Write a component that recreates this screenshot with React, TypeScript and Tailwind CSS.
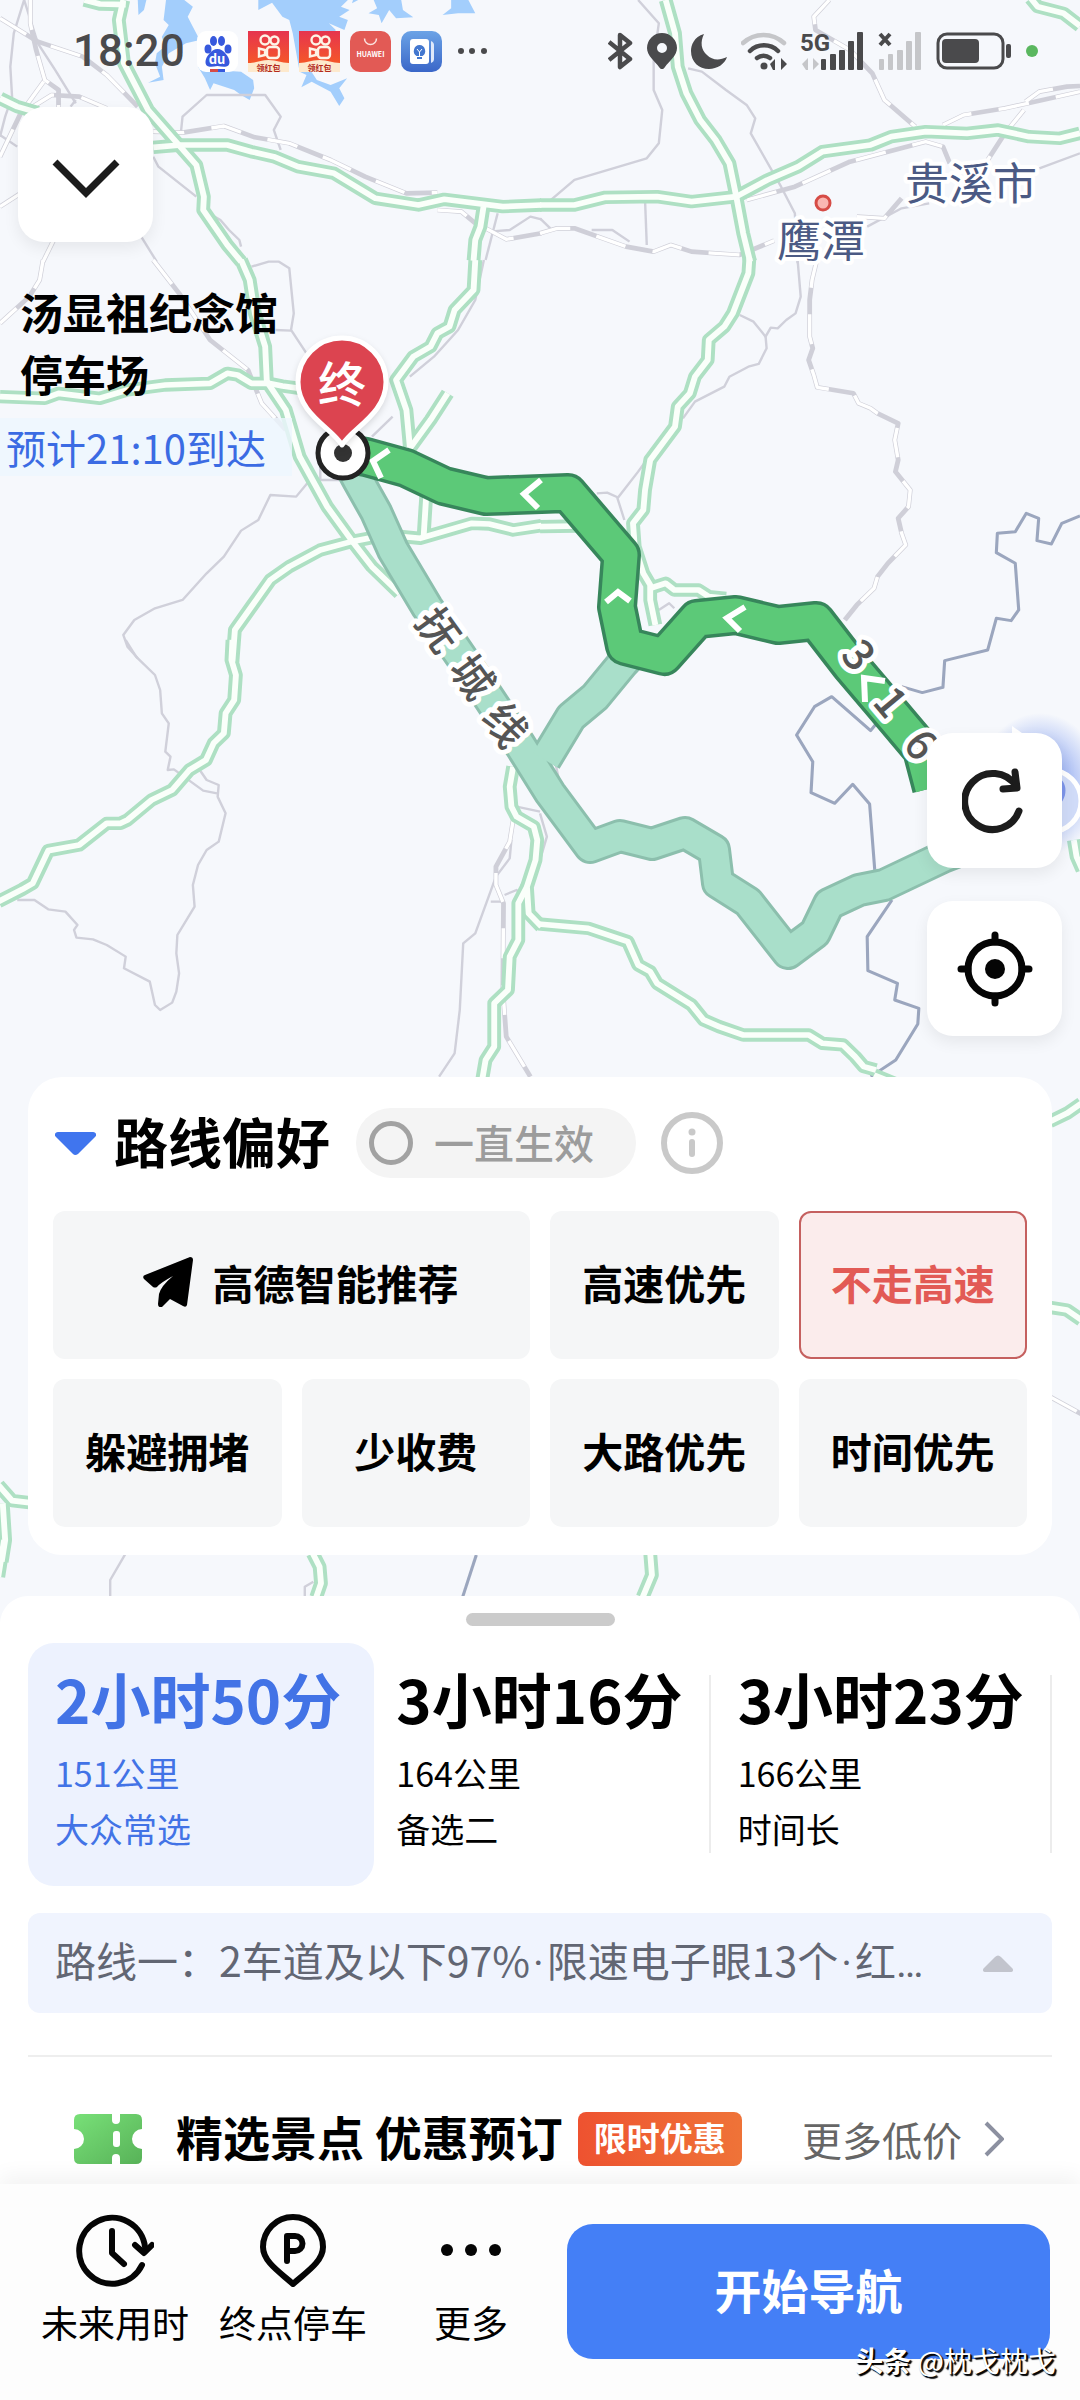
import { useState } from 'react';

type Tile = {
  x: number;
  y: number;
  highways?: string[];
  roads?: string[];
  rails?: string[];
  borders?: string[];
  water?: string[];
};

// Vector tiles, each with its own local coordinates
const TILES: Tile[] = [
  {
    x: 0, y: 0,
    water: [
      '482,0 475,60 490,75 470,110 478,140 455,160 450,190 465,230 430,248 475,240 470,200 490,160 540,130 580,120 560,80 545,50 560,20 535,0',
      '575,200 595,235 610,270 620,250 680,270 700,285 725,300 738,265 735,240 700,215 620,210',
      '750,0 750,30 790,8 820,50 840,60 850,100 870,215 890,225 875,262 905,245 960,275 985,318 1000,295 985,265 1008,235 960,255 920,240 895,200 940,150 975,90 955,70 1000,90 1010,60 985,50 1015,30 990,20 1010,0',
      '1085,0 1095,25 1070,40 1100,45 1108,70 1130,30 1150,55 1200,52 1170,30 1165,0',
      '1310,0 1310,25 1285,45 1330,40 1380,40 1360,0',
      '400,0 402,45 418,30 425,0',
      '1025,0 1022,10 1040,0',
    ],
    highways: [
      '0,295 50,320 110,338',
      '245,0 290,12 365,14',
      '358,0 345,60 360,190 430,330 515,430 570,495 592,590 590,630 660,735 700,785',
      '445,442 525,435 660,435 730,455 795,470 865,500 970,520 1090,595 1215,615 1290,598 1460,620 1572,615',
      '1404,620 1395,680 1380,720 1375,782',
    ],
    roads: [
      '70,0 40,100 30,200 35,290 15,350 0,410',
      '70,0 110,130 160,210 220,310',
      '525,400 530,350 600,285 770,285 815,350 795,390 815,450',
      '445,470 460,500 570,590',
      '590,630 640,660 665,690 695,720 700,740',
      '410,710 455,785',
      '1445,640 1410,780',
      '1420,695 1480,690 1540,650 1572,658',
      '220,300 205,320',
      '0,405 50,440',
    ],
    rails: [
      '0,55 110,125 240,170 310,225 400,320',
      '88,0 88,70 105,150 130,240 170,270 170,322',
      '0,470 60,340 130,240',
      '80,330 150,285 230,290 310,325',
      '445,395 530,398 650,378 740,412 840,430 960,480 1060,530 1180,580 1270,578',
      '125,785 155,722',
      '0,620 60,580',
      '1270,630 1340,635 1380,670',
      '1410,685 1470,718 1572,700',
    ],
  },
  {
    x: 540, y: 0,
    highways: [
      '0,615 100,615 190,592 340,590 440,605 570,590 660,540 750,500 820,455 960,435 1020,410 1120,395 1240,400 1330,390 1420,410 1510,415 1568,400',
      '365,0 392,100 400,200 425,280 465,360 510,420 550,490 570,590 590,700 610,785',
      '1425,-5 1445,20 1520,40 1568,78',
    ],
    roads: [
      '285,0 345,70 330,180 330,270 355,330 345,430 310,475 100,540 20,610',
      '430,205 470,215 540,270 600,315 625,355 612,400 700,560 740,640 748,790',
      '305,600 310,735',
      '1450,505 1568,460',
      '950,680 1050,625 1130,610',
      '150,690 210,690 260,725',
      '0,655 30,685',
    ],
    rails: [
      '0,700 50,685 100,685 250,740 330,755 380,735 440,755 580,765 680,722',
      '840,0 795,50 800,90 900,150 965,220 1000,300 1090,380',
      '600,600 740,560 900,485 1120,425 1170,440 1190,490',
      '1170,375 1230,345 1350,325 1568,275',
      '1410,305 1450,275 1530,260 1568,258',
      '1405,330 1350,400 1300,480',
      '920,650 1000,655 1050,595',
    ],
  },
  {
    x: 0, y: 260,
    highways: [
      '700,0 725,60 740,160 770,260 775,370',
      '0,410 130,415 170,400 290,415 370,390 480,375 610,370 660,340 690,345 730,370 780,370 820,378 870,385',
      '775,365 830,450 870,590 950,740 1020,840 1080,920 1160,1000',
      '675,1205 682,1110 730,1040 785,960 840,920 930,870 1020,845 1120,825 1220,835 1370,790 1420,792 1490,810 1572,797',
      '1380,0 1375,90 1320,150 1305,200 1270,220 1250,260 1200,290 1150,360 1180,450 1190,560',
      '1190,565 1250,480 1300,400',
      '1238,700 1230,830',
    ],
    roads: [
      '730,20 780,5 810,5 840,25 853,160 845,210 890,280',
      '800,210 845,212',
      '1405,0 1380,120 1330,210 1260,290 1190,350',
      '1140,470 1080,530',
      '900,660 860,710 785,705 750,780 700,812 650,890 600,940 530,1020 450,1045 390,1080 358,1125 370,1160 400,1195',
      '930,610 930,660 990,660',
    ],
    rails: [
      '125,0 115,60 85,110 0,190',
      '445,0 520,100 610,240 720,330 760,430 830,510',
    ],
  },
  {
    x: 540, y: 260,
    highways: [
      '608,-6 605,40 560,160 535,200 490,240 487,300 450,350 435,400 400,440 392,500 320,600 305,690 300,750 270,790 275,860 300,940 320,975 320,1020 335,1095',
      '320,985 365,970 390,990 460,990 490,1010 540,1015',
      '0,800 110,798',
    ],
    roads: [
      '748,0 757,110 742,160 715,180 690,205 670,203 655,230 620,185 580,165',
      '655,230 658,265 635,312 605,320 550,350 535,380 450,425 415,475',
      '320,585 285,635 225,715 245,780',
      '165,700 195,698 225,712',
      '345,1050 375,1030 390,1045',
    ],
    rails: [
      '805,-5 790,60 783,120 783,230 792,265 780,300 795,345 805,382 910,400 925,430 960,445 980,460 1040,490 1030,540 1040,600 1032,635 1075,690 1070,740 1040,775 1050,820 1062,855 1010,910 980,950 970,985 920,1035 885,1080',
    ],
    borders: [
      '1568,768 1515,790 1485,852 1443,842 1448,775 1412,760 1380,815 1328,820 1325,878 1380,910 1390,1050 1368,1082 1325,1075 1300,1170 1175,1202 1170,1282 1110,1298 1050,1280',
    ],
  },
  {
    x: 0, y: 640,
    highways: [
      '675,0 672,60 685,105 680,180 655,220 650,280 620,310 598,360 550,390 500,450 440,480 370,540 350,550 310,550 230,615 140,632 95,730 65,748 -5,785',
      '1490,380 1480,440 1485,500 1500,530 1550,560 1560,600 1555,660 1530,740 1535,820 1572,860',
      '1530,740 1505,790 1505,900 1480,950 1475,1050 1435,1090 1435,1220 1410,1260 1400,1320',
    ],
    roads: [
      '365,0 395,50 450,105 465,150 470,220 490,250 480,335 495,350 487,390 505,388 590,452 630,460',
      '580,390 600,420 635,435 632,470 655,520 635,605 600,630 575,675 560,735 565,800 515,885 512,940 520,1000 512,1055 500,1088 465,1110 450,1095 435,1025 360,985 365,950 310,915 270,898 222,893 215,870 225,855 190,815 140,808 100,780 50,780',
      '1485,600 1480,655 1440,710 1380,880 1345,910 1335,1110 1320,1240 1275,1310',
      '1465,765 1500,750 1510,760',
      '1425,785 1465,785',
      '1500,500 1568,515',
    ],
    rails: ['1490,540 1480,605 1440,680 1440,735 1462,790 1460,1050 1470,1190 1540,1310'],
  },
  {
    x: 540, y: 640,
    highways: [
      '-5,852 140,865 255,905 285,975 320,995 340,1030 440,1095 475,1140 520,1160 590,1185 780,1185 820,1210 880,1215 915,1250 940,1280 975,1290',
      '1550,600 1558,650 1575,690',
    ],
    roads: ['0,520 20,590 0,660', '45,370 55,420'],
    borders: [
      '985,240 960,272 847,170 797,200 745,285 792,365 787,458 856,490 908,433 957,492 972,690',
      '1022,780 950,890 952,992 1038,1030 1030,1080 1100,1105 1097,1152 1033,1260 960,1310',
    ],
  },
  {
    x: 0, y: 1060,
    highways: ['-5,1275 35,1322 85,1328', '8,1330 15,1440 5,1505'],
  },
  {
    x: 540, y: 1060,
    highways: ['1480,185 1530,160 1572,130', '1480,742 1530,750 1572,780', '970,45 1030,70'],
    rails: ['1480,1010 1572,1062'],
  },
  {
    x: 0, y: 1540,
    highways: ['12,0 -5,110', '908,40 928,80 932,130 918,172'],
    roads: ['365,40 320,120 320,172', '910,125 885,140 885,172'],
    borders: ['1383,45 1343,172'],
  },
  {
    x: 540, y: 1540,
    highways: ['320,40 325,105 298,172'],
  },
];

const ALT_ROUTE = [
  '343,452 358,480 376,512 393,550 427,607 475,677 520,745 550,793 590,847 620,836 652,844 685,833 714,850 718,883 748,902 788,953 815,933 829,904 859,890 884,885 943,857 1000,835',
  '545,760 571,717 595,697 623,663 640,645',
];
const MAIN_ROUTE =
  '343,453 366,457 406,468 444,486 486,496 568,493 621,555 617,607 625,646 664,656 697,619 736,615 778,625 816,621 850,665 884,705 922,750 932,788';

const CHEVRONS = [
  '389,450 373,461 381,478',
  '541,480 524,494 538,508',
  '606,602 618,592 630,601',
  '745,607 727,618 740,631',
  '865,702 864,678 885,681',
];

const ROAD_NAMES = [
  { t: '抚', x: 441, y: 628, r: 54 },
  { t: '城', x: 475, y: 675, r: 54 },
  { t: '线', x: 508, y: 723, r: 54 },
  { t: '3', x: 861, y: 653, r: 50 },
  { t: '1', x: 893, y: 700, r: 50 },
  { t: '6', x: 924, y: 743, r: 55 },
];

function MapCanvas() {
  const layer = (key: 'highways' | 'roads' | 'rails' | 'borders', stroke: string, width: number, dash?: string) =>
    TILES.map((tile) => (
      <g key={`${tile.x}-${tile.y}`} transform={`translate(${tile.x} ${tile.y}) scale(0.3444 0.3333)`}>
        {(tile[key] ?? []).map((pts) => (
          <polyline key={pts} points={pts} stroke={stroke} strokeWidth={width} strokeDasharray={dash} />
        ))}
      </g>
    ));

  return (
    <svg
      className="absolute inset-x-0 top-0 h-[1640px] w-full"
      viewBox="0 0 1080 1640"
      preserveAspectRatio="xMidYMin slice"
      fill="none"
      strokeLinejoin="round"
      aria-hidden="true"
    >
      <defs>
        <radialGradient id="puckGlow">
          <stop offset="0.4" stopColor="#7f9cf0" stopOpacity="0.7" />
          <stop offset="1" stopColor="#7f9cf0" stopOpacity="0" />
        </radialGradient>
      </defs>

      {TILES.map((tile) => (
        <g key={`${tile.x}-${tile.y}`} transform={`translate(${tile.x} ${tile.y}) scale(0.3444 0.3333)`} fill="#a3cefc">
          {(tile.water ?? []).map((pts) => <polygon key={pts} points={pts} />)}
        </g>
      ))}
      {layer('roads', '#d0d0da', 7)}
      {layer('rails', '#cfcfd8', 14)}
      {layer('rails', '#ffffff', 10, '90 80')}
      {layer('borders', '#9ba6be', 9)}
      {layer('highways', '#aee0c3', 40)}
      {layer('highways', '#fafffa', 17)}

      {/* Cities */}
      <circle cx="823" cy="203" r="7" fill="#fab7b2" stroke="#d64c46" strokeWidth="3" />
      <g
        fill="#4b5a84" stroke="#ffffff" strokeWidth="8" fontSize="44"
        style={{ paintOrder: 'stroke' }} textAnchor="middle" dominantBaseline="central"
      >
        <text x="971" y="181">贵溪市</text>
        <text x="821" y="238">鹰潭</text>
      </g>

      {/* Alternative routes under the selected one */}
      {ALT_ROUTE.map((pts) => <polyline key={pts} points={pts} stroke="#8cbfad" strokeWidth="34" />)}
      {ALT_ROUTE.map((pts) => <polyline key={pts} points={pts} stroke="#a9dfca" strokeWidth="28" />)}
      <polyline points={MAIN_ROUTE} stroke="#37865b" strokeWidth="40" />
      <polyline points={MAIN_ROUTE} stroke="#5cc978" strokeWidth="33" />
      {CHEVRONS.map((pts) => (
        <polyline key={pts} points={pts} stroke="#ffffff" strokeWidth="6" strokeLinejoin="miter" />
      ))}

      {ROAD_NAMES.map(({ t, x, y, r }) => (
        <text
          key={t} transform={`translate(${x} ${y}) rotate(${r})`} fontSize="42" fontWeight="500"
          fill="#555555" stroke="#ffffff" strokeWidth="10" style={{ paintOrder: 'stroke' }}
          textAnchor="middle" dominantBaseline="central"
        >
          {t}
        </text>
      ))}

      {/* Current position */}
      <ellipse cx="1040" cy="785" rx="62" ry="72" fill="url(#puckGlow)" />
      <path d="M1012 726l14 10h-14z" fill="#ffffff" />
      <circle cx="1050" cy="801" r="31" fill="#d0dbf8" stroke="#ffffff" strokeWidth="5" />
      <path d="M1055 776c14 4 14 24 0 32z" fill="#7d95ea" />

      {/* Destination pin */}
      <circle cx="343" cy="453" r="25" fill="#ffffff" stroke="#232323" strokeWidth="5" />
      <circle cx="343" cy="453" r="9" fill="#333333" />
      <path
        d="M342 445C332 428 298 414 298 382a44 44 0 0 1 88 0C386 414 352 428 342 445Z"
        fill="#dc4450" stroke="#ffffff" strokeWidth="5" className="drop-shadow-md"
      />
      <text x="342" y="381" fontSize="48" fontWeight="500" fill="#ffffff" textAnchor="middle" dominantBaseline="central">
        终
      </text>
    </svg>
  );
}

function KuaishouIcon() {
  return (
    <svg className="size-[41px]" viewBox="0 0 41 41" aria-hidden="true">
      <defs>
        <linearGradient id="ks" x1="0" y1="0" x2="0" y2="1">
          <stop offset="0" stopColor="#e6344f" />
          <stop offset="0.75" stopColor="#f4552a" />
        </linearGradient>
      </defs>
      <path d="M0 0h41v41H0z" fill="url(#ks)" />
      <path d="M0 32c8 0 12-3 20.500-3S33 32 41 32v9H0z" fill="#fde9cd" />
      <g fill="none" stroke="#fdf3e6" strokeWidth="2.400">
        <circle cx="17" cy="9" r="4.500" />
        <circle cx="26.500" cy="9.500" r="4" />
        <rect x="19" y="16" width="12" height="11" rx="3" />
        <path d="M17 19l-6-1.500v8l6-1.500z" />
      </g>
      <text x="20.500" y="40" fontSize="8" fontWeight="700" fill="#b32a1d" textAnchor="middle">领红包</text>
    </svg>
  );
}

function StatusBar() {
  return (
    <header className="relative flex h-[102px] items-center justify-between pl-[73px] pr-[42px] text-[#4a4a4c]">
      <div className="flex items-center gap-[10px]">
        <time className="mr-[2px] font-['Roboto'] text-[44px] leading-[50px] font-medium">18:20</time>
        <svg className="size-[41px]" viewBox="0 0 41 41" aria-hidden="true">
          <rect width="41" height="41" rx="9" fill="#ffffff" />
          <g fill="#3759dd">
            <ellipse cx="11" cy="18" rx="3.500" ry="4.500" />
            <ellipse cx="16.500" cy="10" rx="3.500" ry="5" />
            <ellipse cx="24.500" cy="10" rx="3.500" ry="5" />
            <ellipse cx="31" cy="18" rx="3.500" ry="4.500" />
            <path d="M20.500 18c6 0 12 8 12 13 0 6-6 5-12 4-6 1-12 2-12-4 0-5 6-13 12-13z" />
          </g>
          <text x="20" y="33" fontSize="13" fontWeight="700" fill="#ffffff" textAnchor="middle">du</text>
          <path d="M13 38h8v3h-8z" fill="#d64b45" />
          <path d="M21 38h7v3h-7z" fill="#3759dd" />
        </svg>
        <KuaishouIcon />
        <KuaishouIcon />
        <svg className="size-[41px]" viewBox="0 0 41 41" aria-hidden="true">
          <rect width="41" height="41" rx="10" fill="#e25a55" />
          <path d="M14.500 7.500a6 6 0 0 0 12 0" fill="none" stroke="#fbe3e0" strokeWidth="1.500" />
          <text x="20.500" y="26" fontSize="7" fontWeight="600" fill="#ffffff" textAnchor="middle">HUAWEI</text>
        </svg>
        <svg className="size-[41px]" viewBox="0 0 41 41" aria-hidden="true">
          <defs>
            <linearGradient id="tips" x1="0" y1="0" x2="0" y2="1">
              <stop offset="0" stopColor="#6ba3e6" />
              <stop offset="1" stopColor="#3a66c8" />
            </linearGradient>
          </defs>
          <rect width="41" height="41" rx="10" fill="url(#tips)" />
          <rect x="9" y="8" width="19" height="25" rx="3" fill="#ffffff" />
          <path d="M30 10v22c2-1 3-2 3-4V14c0-2-1-3-3-4z" fill="#dfe9fa" />
          <path d="M18.500 14a6 6 0 0 0-3 11h6a6 6 0 0 0-3-11z" fill="#4377cf" />
          <path d="M16 18l2.500 3 2.500-3M18.500 21v5" stroke="#ffffff" fill="none" />
          <path d="M16 26h5v2h-5z" fill="#4377cf" />
        </svg>
        <svg className="ml-[4px] h-[8px] w-[32px]" viewBox="0 0 32 8" fill="currentColor" aria-hidden="true">
          <circle cx="5" cy="4" r="3" /><circle cx="16" cy="4" r="3" /><circle cx="28" cy="4" r="3" />
        </svg>
      </div>

      <div className="flex items-center gap-[14px]">
        <svg className="h-[38px] w-[25px]" viewBox="0 0 25 38" fill="none" stroke="currentColor" strokeWidth="4.500" strokeLinejoin="round" aria-hidden="true">
          <path d="M1 10l21 17-10 8V3l10 8L1 28" />
        </svg>
        <svg className="h-[36px] w-[30px]" viewBox="0 0 30 36" fill="currentColor" fillRule="evenodd" aria-hidden="true">
          <path d="M15 0a15 15 0 0 1 15 15c0 8-8 13-12 19-2 3-4 3-6 0C8 28 0 23 0 15A15 15 0 0 1 15 0zm0 10a5 5 0 1 0 0 10 5 5 0 0 0 0-10z" />
        </svg>
        <svg className="h-[36px] w-[36px]" viewBox="0 0 36 36" fill="currentColor" aria-hidden="true">
          <path d="M13 1C3 4 0 12 0 18c0 11 8 18 18 18 8 0 16-5 18-12-8 4-15 3-20-2-6-5-7-13-3-21z" />
        </svg>
        <svg className="h-[38px] w-[47px]" viewBox="0 0 47 38" fill="none" strokeWidth="4.500" strokeLinecap="round" aria-hidden="true">
          <path d="M2 11a30 30 0 0 1 41 0" stroke="#c5c6c9" />
          <path d="M9 19a20 20 0 0 1 28 0M16 26a11 11 0 0 1 13 0" stroke="currentColor" />
          <circle cx="23" cy="34" r="3.500" fill="currentColor" />
          <path d="M34 27v11h-2l-3-6zM40 38V26l6 6z" fill="currentColor" />
        </svg>
        <svg className="h-[38px] w-[62px] overflow-visible" viewBox="0 0 62 38" fill="currentColor" aria-hidden="true">
          <text x="-2" y="19" fontFamily="Roboto" fontSize="24" fontWeight="700">5G</text>
          <path d="M6 26v12H4l-4-6zM11 38V26l6 6z" fill="#c5c6c9" />
          <rect x="19" y="27" width="5" height="11" rx="1" />
          <rect x="28" y="22" width="6" height="16" rx="1" />
          <rect x="37" y="18" width="6" height="20" rx="1" />
          <rect x="46" y="9" width="6" height="29" rx="1" />
          <rect x="55" y="0" width="6" height="38" rx="1" />
        </svg>
        <svg className="h-[38px] w-[44px]" viewBox="0 0 44 38" fill="#c5c6c9" aria-hidden="true">
          <path d="M2 2l10 11M12 2L2 13" stroke="#4a4a4c" strokeWidth="4" />
          <rect x="1" y="27" width="5" height="11" rx="1" />
          <rect x="10" y="22" width="5" height="16" rx="1" />
          <rect x="19" y="18" width="6" height="20" rx="1" />
          <rect x="28" y="9" width="6" height="29" rx="1" />
          <rect x="37" y="0" width="6" height="38" rx="1" />
        </svg>
        <svg className="h-[38px] w-[76px]" viewBox="0 0 76 38" fill="none" aria-hidden="true">
          <rect x="2" y="2" width="65" height="34" rx="9" stroke="currentColor" strokeWidth="3" />
          <rect x="6" y="7" width="37" height="24" rx="4" fill="currentColor" />
          <rect x="70" y="12" width="5" height="14" rx="2" fill="currentColor" />
        </svg>
        <span className="size-[12px] rounded-full bg-[#5ab75f]" />
      </div>
    </header>
  );
}

const FLOAT_BUTTON =
  'flex size-[135px] items-center justify-center rounded-[26px] bg-white shadow-[0_6px_16px_rgba(0,0,0,0.07)]';

function MapControls() {
  return (
    <section className="relative flex flex-1 flex-col justify-between px-[18px] pt-[5px] pb-[41px]">
      <button type="button" aria-label="收起" className={FLOAT_BUTTON}>
        <svg className="h-[48px] w-[68px]" viewBox="0 -8 68 48" fill="none" stroke="#1c1c1c" strokeWidth="7" aria-hidden="true">
          <path d="M3 3l31 31L65 3" />
        </svg>
      </button>

      {/* Destination label sits beside its pin */}
      <div className="absolute top-[178px] left-0">
        <h1 className="w-[292px] pl-5 text-[43px] leading-[62px] font-bold text-black">汤显祖纪念馆停车场</h1>
        <p className="mt-[14px] bg-[#eef6fe]/80 pl-[6px] text-[40px] leading-[58px] text-[#3b6be3]">预计21:10到达</p>
      </div>

      <div className="flex flex-col items-end gap-[33px]">
        <button type="button" aria-label="刷新路线" className={FLOAT_BUTTON}>
          <svg className="size-[66px]" viewBox="0 0 66 66" fill="none" stroke="#1c1c1c" strokeWidth="7" strokeLinecap="round" strokeLinejoin="round" aria-hidden="true">
            <path d="M57 43a28 28 0 1 1-3-25" />
            <path d="M53 4l2 16-14 1" />
          </svg>
        </button>
        <button type="button" aria-label="定位" className={FLOAT_BUTTON}>
          <svg className="size-[76px]" viewBox="0 0 76 76" fill="none" stroke="#050505" strokeWidth="7" strokeLinecap="round" aria-hidden="true">
            <circle cx="38" cy="38" r="27" />
            <path d="M38 4v7M38 65v7M4 38h7M65 38h7" />
            <circle cx="38" cy="38" r="10" fill="#050505" stroke="none" />
          </svg>
        </button>
      </div>
    </section>
  );
}

const PREFERENCES = ['高德智能推荐', '高速优先', '不走高速', '躲避拥堵', '少收费', '大路优先', '时间优先'];

function PreferenceCard() {
  const [selected, setSelected] = useState('不走高速');
  const [always, setAlways] = useState(false);

  return (
    <section className="relative mx-7 mb-[41px] rounded-[34px] bg-white px-[25px] pt-[31px] pb-[28px]">
      <div className="flex items-center pl-[2px]">
        <svg className="h-[23px] w-[41px]" viewBox="0 0 41 23" fill="#4075ee" aria-hidden="true">
          <path d="M3 0h35c3 0 4 3 2 5L23 22q-3 2-5 0L1 5C-1 3 0 0 3 0z" />
        </svg>
        <h2 className="ml-[18px] pb-[4px] text-[54px] leading-[66px] font-bold text-black">路线偏好</h2>
        <label className="ml-[26px] flex h-[70px] w-[280px] items-center gap-[21px] rounded-full bg-[#f4f4f4] pl-[13px] text-[40px] leading-[50px] font-medium text-[#9c9c9c]">
          <input
            type="checkbox"
            checked={always}
            onChange={(e) => setAlways(e.target.checked)}
            className="size-[44px] appearance-none rounded-full border-[5px] border-[#a2a2a2] checked:bg-[#4075ee]"
          />
          <span className="pb-[2px]">一直生效</span>
        </label>
        <button type="button" aria-label="说明" className="ml-[25px]">
          <svg className="size-[62px]" viewBox="0 0 62 62" fill="#c9c9c9" aria-hidden="true">
            <circle cx="31" cy="31" r="28" fill="none" stroke="#c9c9c9" strokeWidth="6" />
            <circle cx="31" cy="20" r="3.500" />
            <rect x="28" y="27" width="6" height="18" rx="3" />
          </svg>
        </button>
      </div>

      <div className="mt-[33px] grid grid-cols-4 gap-5">
        {PREFERENCES.map((name, i) => (
          <button
            key={name}
            type="button"
            aria-pressed={selected === name}
            onClick={() => setSelected(name)}
            className={`flex h-[148px] items-center justify-center rounded-[12px] pb-[6px] text-[41px] leading-[50px] font-bold ${
              i === 0 ? 'col-span-2 gap-[20px] pl-[18px]' : ''
            } ${selected === name ? 'border-2 border-[#c5605f] bg-[#fbecec] text-[#e25a55]' : 'bg-[#f5f6f7] text-black'}`}
          >
            {i === 0 && (
              <svg className="size-[50px]" viewBox="0 0 50 50" aria-hidden="true">
                <path d="M47 0q3 0 3 3l-6 45q-1 3-4 1L27 42l-8 8q-4 1-4-3l1-10q2-8 14-18Q17 26 14 30q-2 1-4 0L1 22q-2-3 1-4z" />
              </svg>
            )}
            {name}
          </button>
        ))}
      </div>
    </section>
  );
}

const ROUTES = [
  { time: '2小时50分', distance: '151公里', tag: '大众常选' },
  { time: '3小时16分', distance: '164公里', tag: '备选二' },
  { time: '3小时23分', distance: '166公里', tag: '时间长' },
];

const SUMMARY = ['路线一：2车道及以下97%', '限速电子眼13个', '红'];

function RouteSheet() {
  const [active, setActive] = useState(0);

  return (
    <section className="relative rounded-t-[28px] bg-white px-7 pt-[17px]">
      <div className="mx-auto h-[13px] w-[149px] rounded-full bg-[#cbcbcb]" />

      <div className="mt-[17px] grid grid-cols-3">
        {ROUTES.map((route, i) => (
          <button
            key={route.time}
            type="button"
            aria-pressed={active === i}
            onClick={() => setActive(i)}
            className={`relative flex h-[243px] flex-col items-start rounded-[26px] pt-[25px] pl-[27px] whitespace-nowrap ${
              active === i ? '-mr-[5px] bg-[#edf2fe] text-[#4273e6]' : 'text-black'
            }`}
          >
            <span className="text-[60px] leading-[60px] font-bold">{route.time}</span>
            <span className="mt-[17px] text-[34px] leading-[56px]">{route.distance}</span>
            <span className="text-[34px] leading-[56px]">{route.tag}</span>
            {active !== i && <span className="absolute top-[32px] right-0 h-[178px] w-[2px] bg-[#ececec]" />}
          </button>
        ))}
      </div>

      <button
        type="button"
        className="mt-[27px] flex h-[100px] w-full items-center justify-between rounded-[12px] bg-[#f0f4fe] pr-[39px] pl-[27px] text-[41px] leading-[50px] text-[#626673]"
      >
        <span className="pb-[4px] whitespace-nowrap">
          {SUMMARY.map((part, i) => (
            <span key={part}>
              {i > 0 && <span className="mx-[3px] font-['Roboto']">·</span>}
              {part}
            </span>
          ))}
          <span className="font-['Roboto']">…</span>
        </span>
        <svg className="h-[17px] w-[30px] shrink-0" viewBox="0 0 30 17" fill="#c2c4cd" aria-hidden="true">
          <path d="M3 17h24c3 0 4-2 2-4L18 2q-3-3-6 0L1 13c-2 2-1 4 2 4z" />
        </svg>
      </button>

      <div className="mt-[42px] border-t-2 border-[#eeeeee]" />

      <div className="flex items-center pt-[52px] pb-[15px] pl-[46px]">
        <svg className="h-[50px] w-[68px]" viewBox="0 0 68 50" aria-hidden="true">
          <defs>
            <linearGradient id="ticket" x1="0" y1="0" x2="1" y2="1">
              <stop offset="0" stopColor="#78e078" />
              <stop offset="1" stopColor="#58b258" />
            </linearGradient>
          </defs>
          <path
            d="M6 0h32v6a4 4 0 0 0 8 0V0h16q6 0 6 6v9a10 10 0 0 0 0 20v9q0 6-6 6H46v-6a4 4 0 0 0-8 0v6H6q-6 0-6-6v-9a10 10 0 0 0 0-20V6q0-6 6-6z"
            fill="url(#ticket)"
          />
          <rect x="39" y="17" width="7" height="16" rx="3" fill="#ffffff" />
        </svg>
        <h3 className="ml-[34px] pb-[6px] text-[47px] leading-[54px] font-bold whitespace-nowrap text-black">精选景点 优惠预订</h3>
        <span className="ml-[15px] rounded-[8px] bg-linear-to-r from-[#ee5230] to-[#ef7338] px-4 pb-[4px] text-[33px] leading-[50px] font-bold whitespace-nowrap text-white">
          限时优惠
        </span>
        <a href="#deals" className="mr-[48px] ml-auto flex items-center gap-[22px] text-[40px] leading-[50px] whitespace-nowrap text-[#666666]">
          更多低价
          <svg className="h-[36px] w-[20px]" viewBox="0 0 20 36" fill="none" stroke="#8c90a0" strokeWidth="4" aria-hidden="true">
            <path d="M2 2l16 16L2 34" />
          </svg>
        </a>
      </div>
    </section>
  );
}

function BottomBar() {
  const item = 'flex w-[178px] flex-col items-center gap-[10px] text-[37px] leading-[50px] text-black';

  return (
    <footer className="relative flex bg-[#fdfdfd] pt-[30px] pr-[30px] pb-[41px] pl-[26px] shadow-[0_-8px_20px_rgba(0,0,0,0.05)]">
      <button type="button" className={item}>
        <svg className="h-[73px] w-[78px]" viewBox="0 0 78 73" fill="none" stroke="#050505" strokeWidth="6" strokeLinecap="round" strokeLinejoin="round" aria-hidden="true">
          <path d="M66 51A33 33 0 1 1 69 33" />
          <path d="M59 31l9 8 8-8M36 17v22l12 11" />
        </svg>
        未来用时
      </button>
      <button type="button" className={item}>
        <svg className="h-[73px] w-[66px]" viewBox="0 0 66 73" fill="none" stroke="#050505" strokeWidth="6" strokeLinecap="round" strokeLinejoin="round" aria-hidden="true">
          <path d="M33 70C21 59 3 48 3 33a30 30 0 0 1 60 0C63 48 45 59 33 70z" />
          <path d="M27 47V22h8a7 7 0 0 1 0 15h-8" />
        </svg>
        终点停车
      </button>
      <button type="button" className={item}>
        <svg className="h-[73px] w-[60px]" viewBox="0 0 60 73" fill="#050505" aria-hidden="true">
          <circle cx="6" cy="36" r="6" /><circle cx="30" cy="36" r="6" /><circle cx="54" cy="36" r="6" />
        </svg>
        更多
      </button>
      <button
        type="button"
        className="mt-[10px] ml-[7px] h-[135px] flex-1 rounded-[26px] bg-[#447ff6] pb-[6px] text-[47px] leading-[60px] font-bold text-white"
      >
        开始导航
      </button>
      <p className="absolute right-[24px] bottom-[22px] text-[28px] leading-[36px] text-white [text-shadow:2px_2px_1px_#000,1px_1px_1px_#000]">
        <b>头条</b> @枕戈枕戈
      </p>
    </footer>
  );
}

export default function App() {
  return (
    <main
      lang="zh-CN"
      className="relative flex min-h-screen flex-col overflow-hidden bg-[#f6f8fc] font-['Noto_Sans_CJK_SC',sans-serif]"
    >
      <MapCanvas />
      <StatusBar />
      <MapControls />
      <PreferenceCard />
      <RouteSheet />
      <BottomBar />
    </main>
  );
}
